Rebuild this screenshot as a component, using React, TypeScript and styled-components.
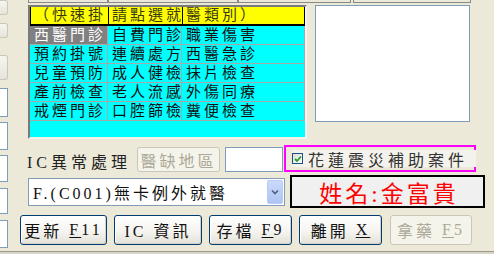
import styled, { createGlobalStyle } from "styled-components";

const GlobalStyle = createGlobalStyle`
    body {
        margin: 0;
        background: #ece9d8;
    }
`;

const FONT = `"Liberation Serif", "Noto Sans CJK TC", serif`;

const Root = styled.div`
    width: 494px;
    height: 254px;
    background: #ece9d8;
    display: flex;
    flex-direction: column;
    overflow: hidden;
    font-family: ${FONT};
    color: #000;
`;

const Main = styled.div`
    display: flex;
    height: 251px;
`;

const LeftRail = styled.div`
    width: 8px;
    flex-shrink: 0;
    display: flex;
    flex-direction: column;
`;

const RailButton = styled.div<{ $h: number; $mt: number }>`
    height: ${(p) => p.$h}px;
    margin-top: ${(p) => p.$mt}px;
    box-sizing: border-box;
    background: linear-gradient(180deg, #f6f5f0, #e6e4da);
    border: 1px solid #c9c7ba;
    border-left: none;
    border-radius: 0 3px 3px 0;
`;

const RailBox = styled.div<{ $h: number; $mt: number }>`
    height: ${(p) => p.$h}px;
    margin-top: ${(p) => p.$mt}px;
    box-sizing: border-box;
    background: #fff;
    border: 1px solid #7f9db9;
    border-left: none;
`;

const Content = styled.div`
    flex: 1;
    display: flex;
    flex-direction: column;
`;

const TopStrip = styled.div`
    display: flex;
    height: 3px;
    margin-left: 20px;
`;

const StripCell = styled.div<{ $w: number; $gap?: number }>`
    width: ${(p) => p.$w}px;
    margin-right: ${(p) => p.$gap ?? 0}px;
    box-sizing: border-box;
    border: 1px solid #8a8a8a;
    border-top: none;
`;

const UpperRow = styled.div`
    display: flex;
    align-items: flex-start;
    gap: 8px;
    margin-top: 2px;
    padding-left: 20px;
`;

const GridFrame = styled.div`
    width: 279px;
    height: 134px;
    box-sizing: border-box;
    border: 2px solid;
    border-color: #7a7a7a #f4f3ee #f4f3ee #7a7a7a;
    background: #00ffff;
`;

const Columns = styled.div`
    display: grid;
    grid-template-columns: 78px 74px 1fr;
`;

const HeaderRow = styled(Columns)`
    height: 19px;
    box-sizing: border-box;
    background: #ffff00;
    border-left: 1px solid #000;
    border-right: 1px solid #000;
    border-bottom: 2px solid #000;
`;

const HeaderCell = styled.div<{ $last?: boolean }>`
    border-right: ${(p) => (p.$last ? "none" : "1px solid #000")};
    padding-left: 3px;
    font-size: 15px;
    line-height: 17px;
    letter-spacing: 3px;
    color: #3a3a10;
    white-space: nowrap;
`;

const Cell = styled.div<{ $selected?: boolean }>`
    height: 19px;
    box-sizing: border-box;
    border-right: 1px solid #a8a8a8;
    border-bottom: 1px solid #a8a8a8;
    padding-left: 4px;
    font-size: 15px;
    line-height: 18px;
    letter-spacing: 3px;
    white-space: nowrap;
    background: ${(p) => (p.$selected ? "#808080" : "transparent")};
    color: ${(p) => (p.$selected ? "#fff" : "#111")};
`;

const MemoBox = styled.div`
    width: 155px;
    height: 117px;
    box-sizing: border-box;
    background: #fff;
    border: 1px solid #7f9db9;
`;

const RowA = styled.div`
    display: flex;
    align-items: flex-start;
    height: 27px;
    margin-top: 6px;
    padding-left: 19px;
`;

const IcLabel = styled.div`
    width: 110px;
    margin-top: 8px;
    font-size: 16px;
    line-height: 20px;
    letter-spacing: 4px;
    color: #222;
    white-space: nowrap;
`;

const XpButton = styled.button<{ $w: number; $h?: number; $disabled?: boolean }>`
    width: ${(p) => p.$w}px;
    height: ${(p) => p.$h ?? 30}px;
    box-sizing: border-box;
    padding: 0;
    font-family: ${FONT};
    font-size: 16px;
    letter-spacing: 3px;
    white-space: nowrap;
    border-radius: 3px;
    border: 1px solid ${(p) => (p.$disabled ? "#c9c7ba" : "#003c74")};
    color: ${(p) => (p.$disabled ? "#aca899" : "#111")};
    background: ${(p) =>
        p.$disabled
            ? "#f5f4ea"
            : "linear-gradient(180deg, #ffffff 0%, #f5f4f0 55%, #e3e1d7 100%)"};
    box-shadow: ${(p) =>
        p.$disabled ? "none" : "inset -1px -1px 0 #d6d0c5, inset 1px 1px 0 #fff"};
    display: flex;
    align-items: center;
    justify-content: center;
`;

const Key = styled.span`
    text-decoration: underline;
    text-underline-offset: 2px;
`;

const Field = styled.div`
    width: 58px;
    height: 25px;
    margin-top: 2px;
    margin-left: 5px;
    box-sizing: border-box;
    background: #fff;
    border: 1px solid #7f9db9;
`;

const Highlight = styled.div`
    width: 192px;
    height: 27px;
    margin-left: 1px;
    box-sizing: border-box;
    border: 2px solid #ff00ff;
    display: flex;
    align-items: center;
    padding: 0 0 0 6px;
`;

const CheckLabel = styled.label`
    display: flex;
    align-items: center;
    gap: 5px;
    height: 17px;
    padding-right: 8px;
    background: #f3f2ec;
    font-size: 16px;
    letter-spacing: 4px;
    color: #333;
    white-space: nowrap;
`;

const CheckBox = styled.span`
    width: 11px;
    height: 11px;
    box-sizing: border-box;
    border: 1px solid #1c5180;
    background: linear-gradient(135deg, #dcdcd7, #fff);
    display: flex;
    align-items: center;
    justify-content: center;
`;

const RowB = styled.div`
    display: flex;
    align-items: flex-start;
    height: 33px;
    margin-top: 3px;
    padding-left: 20px;
`;

const Select = styled.div`
    width: 257px;
    height: 28px;
    margin-top: 3px;
    box-sizing: border-box;
    background: #fff;
    border: 1px solid #7f9db9;
    display: flex;
    align-items: center;
    padding: 0 1px 0 4px;
`;

const SelectText = styled.div`
    flex: 1;
    font-size: 16px;
    letter-spacing: 3px;
    white-space: nowrap;
    color: #111;
`;

const DropButton = styled.div`
    width: 16px;
    height: 24px;
    box-sizing: border-box;
    border: 1px solid #b9cbf5;
    border-radius: 2px;
    background: linear-gradient(180deg, #cbd9fb, #aec4f3);
    display: flex;
    align-items: center;
    justify-content: center;
`;

const NameBox = styled.div`
    width: 195px;
    height: 33px;
    margin-left: 5px;
    box-sizing: border-box;
    border: 2px solid #000;
    background: #f0f0f0;
    display: flex;
    align-items: center;
    justify-content: center;
    padding-left: 3px;
    font-size: 23px;
    letter-spacing: 3px;
    color: #ff0000;
    white-space: nowrap;
`;

const RowC = styled.div`
    display: flex;
    gap: 7px;
    margin-top: 7px;
    padding-left: 12px;
`;

const StatusLine = styled.div`
    height: 3px;
    box-sizing: border-box;
    border-top: 1px solid #9a9a90;
    background: #d8d4c6;
`;

const gridRows = [
    ["西醫門診", "自費門診", "職業傷害"],
    ["預約掛號", "連續處方", "西醫急診"],
    ["兒童預防", "成人健檢", "抹片檢查"],
    ["產前檢查", "老人流感", "外傷同療"],
    ["戒煙門診", "口腔篩檢", "糞便檢查"],
];

const railBoxes = [
    { h: 29, mt: 8 },
    { h: 28, mt: 5 },
    { h: 27, mt: 5 },
    { h: 26, mt: 6 },
    { h: 28, mt: 6 },
];

export default function App() {
    return (
        <Root>
            <GlobalStyle />
            <Main>
                <LeftRail>
                    <RailButton $h={15} $mt={0} />
                    <RailButton $h={15} $mt={8} />
                    <RailButton $h={25} $mt={17} />
                    {railBoxes.map((b, i) => (
                        <RailBox key={i} $h={b.h} $mt={b.mt} />
                    ))}
                </LeftRail>
                <Content>
                    <TopStrip>
                        <StripCell $w={80} />
                        <StripCell $w={130} />
                        <StripCell $w={113} $gap={2} />
                        <StripCell $w={118} />
                    </TopStrip>

                    <UpperRow>
                        <GridFrame>
                            <HeaderRow>
                                <HeaderCell>（快速掛</HeaderCell>
                                <HeaderCell>請點選就</HeaderCell>
                                <HeaderCell $last>醫類別）</HeaderCell>
                            </HeaderRow>
                            <Columns>
                                {gridRows.map((row, r) =>
                                    row.map((txt, c) => (
                                        <Cell
                                            key={r + "-" + c}
                                            $selected={r === 0 && c === 0}>
                                            {txt}
                                        </Cell>
                                    )),
                                )}
                            </Columns>
                        </GridFrame>
                        <MemoBox />
                    </UpperRow>

                    <RowA>
                        <IcLabel>IC異常處理</IcLabel>
                        <XpButton $w={83} $h={25} $disabled style={{ marginTop: 2 }}>
                            醫缺地區
                        </XpButton>
                        <Field />
                        <Highlight>
                            <CheckLabel>
                                <CheckBox>
                                    <svg width="8" height="8" viewBox="0 0 8 8">
                                        <path
                                            d="M1 4 L3 6 L7 1.5"
                                            fill="none"
                                            stroke="#21a121"
                                            strokeWidth="1.8"
                                        />
                                    </svg>
                                </CheckBox>
                                花蓮震災補助案件
                            </CheckLabel>
                        </Highlight>
                    </RowA>

                    <RowB>
                        <Select>
                            <SelectText>F.(C001)無卡例外就醫</SelectText>
                            <DropButton>
                                <svg width="8" height="6" viewBox="0 0 8 6">
                                    <path
                                        d="M1 1.5 L4 4.5 L7 1.5"
                                        fill="none"
                                        stroke="#4d6185"
                                        strokeWidth="1.6"
                                    />
                                </svg>
                            </DropButton>
                        </Select>
                        <NameBox>姓名:金富貴</NameBox>
                    </RowB>

                    <RowC>
                        <XpButton $w={87}>
                            更新&nbsp;<Key>F</Key>11
                        </XpButton>
                        <XpButton $w={88}>IC&nbsp;資訊</XpButton>
                        <XpButton $w={83}>
                            存檔&nbsp;<Key>F</Key>9
                        </XpButton>
                        <XpButton $w={83}>
                            離開&nbsp;<Key>X</Key>
                        </XpButton>
                        <XpButton $w={82} $disabled style={{ marginLeft: 1 }}>
                            拿藥&nbsp;<Key>F</Key>5
                        </XpButton>
                    </RowC>
                </Content>
            </Main>
            <StatusLine />
        </Root>
    );
}
